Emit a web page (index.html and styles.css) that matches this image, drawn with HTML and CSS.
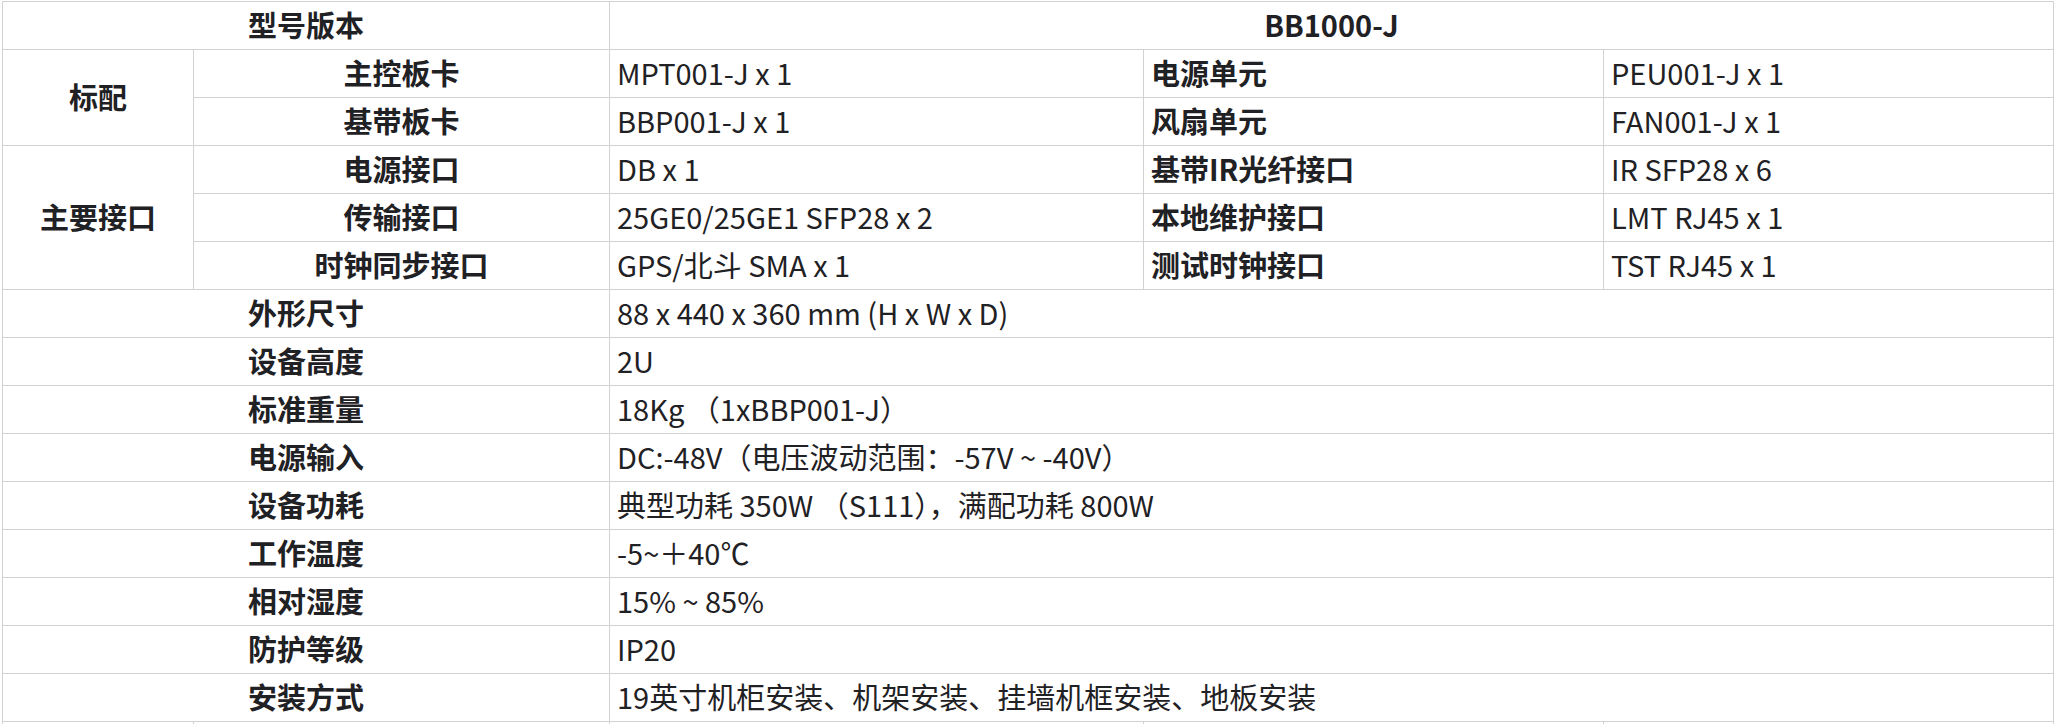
FILE: index.html
```html
<!DOCTYPE html>
<html lang="zh-CN">
<head>
<meta charset="utf-8">
<title>BB1000-J 规格</title>
<link rel="stylesheet" href="styles.css">
</head>
<body>
<div class="sheet">
  <table class="spec">
    <colgroup>
      <col class="c-group">
      <col class="c-label">
      <col class="c-val">
      <col class="c-label2">
      <col class="c-val2">
    </colgroup>
    <tbody>
      <tr>
        <th class="center" colspan="2">型号版本</th>
        <th class="center" colspan="3">BB1000-J</th>
      </tr>
      <tr>
        <th class="center" rowspan="2">标配</th>
        <th class="center">主控板卡</th>
        <td>MPT001-J x 1</td>
        <th class="left">电源单元</th>
        <td>PEU001-J x 1</td>
      </tr>
      <tr>
        <th class="center">基带板卡</th>
        <td>BBP001-J x 1</td>
        <th class="left">风扇单元</th>
        <td>FAN001-J x 1</td>
      </tr>
      <tr>
        <th class="center" rowspan="3">主要接口</th>
        <th class="center">电源接口</th>
        <td>DB x 1</td>
        <th class="left">基带IR光纤接口</th>
        <td>IR SFP28 x 6</td>
      </tr>
      <tr>
        <th class="center">传输接口</th>
        <td>25GE0/25GE1 SFP28 x 2</td>
        <th class="left">本地维护接口</th>
        <td>LMT RJ45 x 1</td>
      </tr>
      <tr>
        <th class="center">时钟同步接口</th>
        <td>GPS/北斗 SMA x 1</td>
        <th class="left">测试时钟接口</th>
        <td>TST RJ45 x 1</td>
      </tr>
      <tr>
        <th class="center" colspan="2">外形尺寸</th>
        <td colspan="3">88 x 440 x 360 mm (H x W x D)</td>
      </tr>
      <tr>
        <th class="center" colspan="2">设备高度</th>
        <td colspan="3">2U</td>
      </tr>
      <tr>
        <th class="center" colspan="2">标准重量</th>
        <td colspan="3">18Kg （1xBBP001-J）</td>
      </tr>
      <tr>
        <th class="center" colspan="2">电源输入</th>
        <td colspan="3">DC:-48V（电压波动范围：-57V ~ -40V）</td>
      </tr>
      <tr>
        <th class="center" colspan="2">设备功耗</th>
        <td colspan="3">典型功耗 350W （S111），满配功耗 800W</td>
      </tr>
      <tr>
        <th class="center" colspan="2">工作温度</th>
        <td colspan="3">-5~＋40℃</td>
      </tr>
      <tr>
        <th class="center" colspan="2">相对湿度</th>
        <td colspan="3">15% ~ 85%</td>
      </tr>
      <tr>
        <th class="center" colspan="2">防护等级</th>
        <td colspan="3">IP20</td>
      </tr>
      <tr>
        <th class="center" colspan="2">安装方式</th>
        <td colspan="3">19英寸机柜安装、机架安装、挂墙机框安装、地板安装</td>
      </tr>
      <tr class="next">
        <td></td>
        <td></td>
        <td></td>
        <td></td>
        <td></td>
      </tr>
    </tbody>
  </table>
</div>
</body>
</html>
```

FILE: styles.css
```css
html, body {
  margin: 0;
  padding: 0;
  background: #ffffff;
}

.sheet {
  height: 724px;
  overflow: hidden;
  padding: 1px 0 0 2px;
  box-sizing: border-box;
}

.spec {
  border-collapse: collapse;
  table-layout: fixed;
  width: 2051px;
  font-family: "Noto Sans CJK SC", "Noto Sans", sans-serif;
  font-size: 29px;
  color: #1f2124;
}

.c-group { width: 191px; }
.c-label { width: 416px; }
.c-val { width: 534px; }
.c-label2 { width: 460px; }
.c-val2 { width: 450px; }

.spec th,
.spec td {
  border: 1px solid #d2d2d2;
  height: 48px;
  padding: 0 7px 3px;
  box-sizing: border-box;
  vertical-align: middle;
  white-space: nowrap;
  overflow: hidden;
  line-height: 1;
}

.spec th {
  font-weight: 700;
}

.spec td {
  font-weight: 400;
  text-align: left;
}

.spec th.center {
  text-align: center;
}

.spec th.left {
  text-align: left;
}

.spec .next td {
  height: 48px;
}
```
